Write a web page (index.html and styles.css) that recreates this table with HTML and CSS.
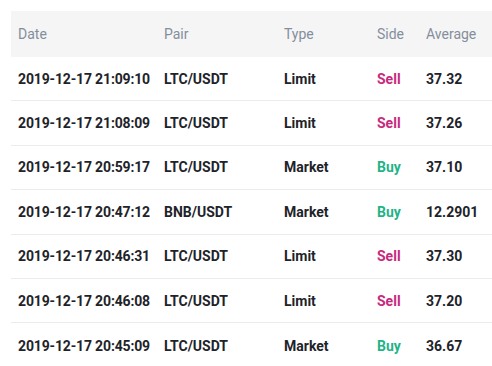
FILE: index.html
```html
<!DOCTYPE html>
<html>
<head>
<meta charset="utf-8">
<link rel="stylesheet" href="styles.css">
</head>
<body>
<div class="table">
  <div class="row head">
    <div>Date</div><div>Pair</div><div>Type</div><div>Side</div><div>Average</div>
  </div>
  <div class="row">
    <div class="date">2019-12-17 21:09:10</div><div>LTC/USDT</div><div>Limit</div><div class="sell">Sell</div><div>37.32</div>
  </div>
  <div class="row">
    <div class="date">2019-12-17 21:08:09</div><div>LTC/USDT</div><div>Limit</div><div class="sell">Sell</div><div>37.26</div>
  </div>
  <div class="row">
    <div class="date">2019-12-17 20:59:17</div><div>LTC/USDT</div><div>Market</div><div class="buy">Buy</div><div>37.10</div>
  </div>
  <div class="row">
    <div class="date">2019-12-17 20:47:12</div><div>BNB/USDT</div><div>Market</div><div class="buy">Buy</div><div>12.2901</div>
  </div>
  <div class="row">
    <div class="date">2019-12-17 20:46:31</div><div>LTC/USDT</div><div>Limit</div><div class="sell">Sell</div><div>37.30</div>
  </div>
  <div class="row">
    <div class="date">2019-12-17 20:46:08</div><div>LTC/USDT</div><div>Limit</div><div class="sell">Sell</div><div>37.20</div>
  </div>
  <div class="row last">
    <div class="date">2019-12-17 20:45:09</div><div>LTC/USDT</div><div>Market</div><div class="buy">Buy</div><div>36.67</div>
  </div>
</div>
</body>
</html>
```
FILE: styles.css
```css
html, body {
  margin: 0;
  padding: 0;
  background: #ffffff;
  overflow: hidden;
}
body {
  padding: 11px 0 0 11px;
  font-family: Roboto, "Liberation Sans", sans-serif;
  font-size: 14px;
  color: #1e2329;
}
.table {
  width: 481px;
}
.row {
  display: grid;
  grid-template-columns: 146px 120px 93px 49px 1fr;
  align-items: center;
  height: 44.4px;
  box-sizing: border-box;
  border-bottom: 1px solid #eaecef;
  font-weight: 700;
}
.row > div {
  padding-left: 7px;
  white-space: nowrap;
}
.row > .date {
  letter-spacing: -0.15px;
}
.row.head {
  height: 46px;
  background: #f5f5f5;
  border-bottom: none;
  font-weight: 400;
  color: #848e9c;
}
.row.last {
  border-bottom: none;
}
.sell { color: #c72a7e; }
.buy { color: #1fb387; }
```
